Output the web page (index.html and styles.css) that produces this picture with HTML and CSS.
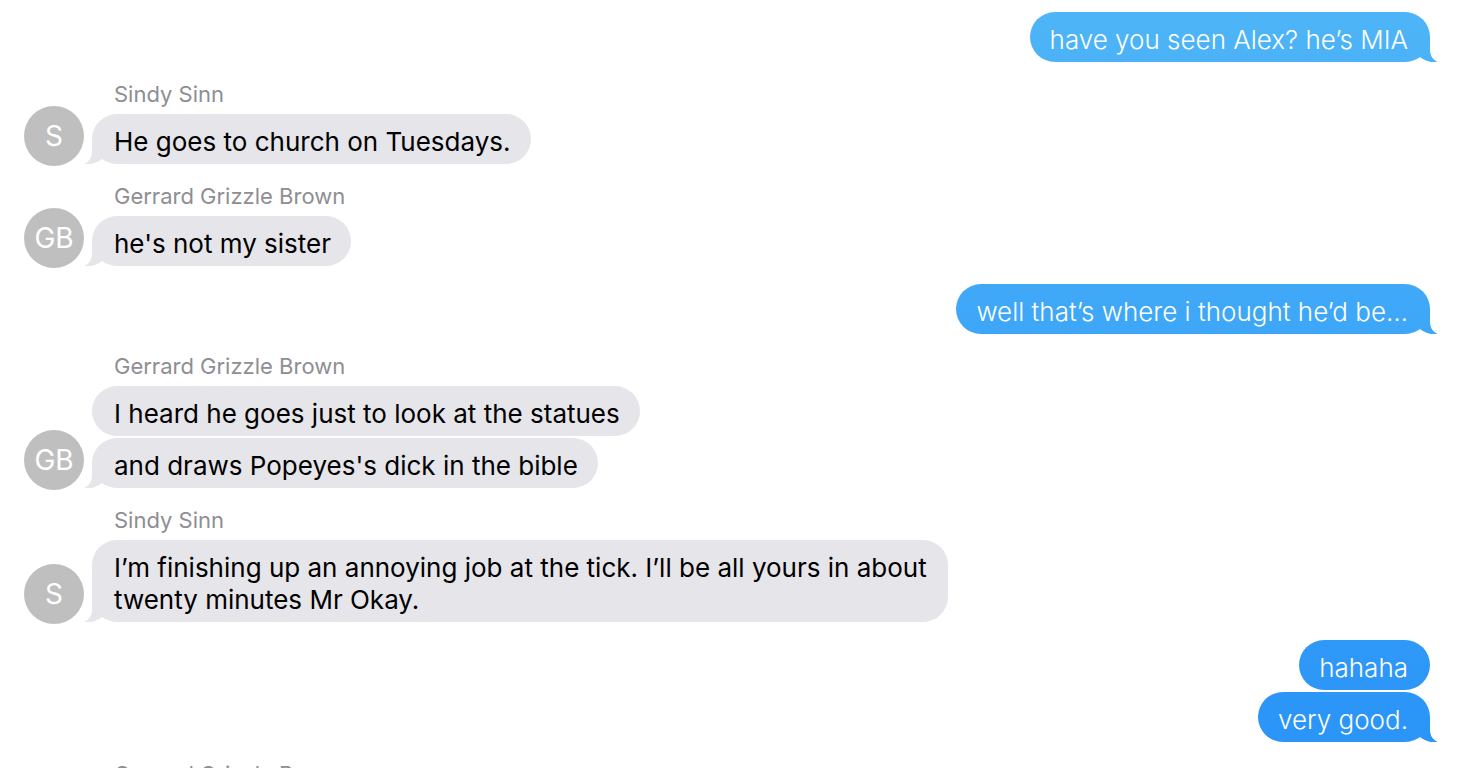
FILE: index.html
```
<!DOCTYPE html>
<html lang="en">
  <head>
    <meta charset="utf-8" />
    <title>Messages</title>
    <meta name="viewport" content="width=device-width,initial-scale=1" />
    <link rel="stylesheet" href="styles.css">
  </head>
  <body>
    <main class="thread">
      <section class="group group--sent">
        <p class="bubble bubble--tail">have you seen Alex? he’s MIA</p>
      </section>

      <section class="group">
        <h2 class="sender">Sindy Sinn</h2>
        <div class="row">
          <span class="avatar">S</span>
          <div class="bubbles">
            <p class="bubble bubble--tail">He goes to church on Tuesdays.</p>
          </div>
        </div>
      </section>

      <section class="group">
        <h2 class="sender">Gerrard Grizzle Brown</h2>
        <div class="row">
          <span class="avatar">GB</span>
          <div class="bubbles">
            <p class="bubble bubble--tail">he's not my sister</p>
          </div>
        </div>
      </section>

      <section class="group group--sent">
        <p class="bubble bubble--tail">well that’s where i thought he’d be…</p>
      </section>

      <section class="group">
        <h2 class="sender">Gerrard Grizzle Brown</h2>
        <div class="row">
          <span class="avatar">GB</span>
          <div class="bubbles">
            <p class="bubble">I heard he goes just to look at the statues</p>
            <p class="bubble bubble--tail">and draws Popeyes's dick in the bible</p>
          </div>
        </div>
      </section>

      <section class="group">
        <h2 class="sender">Sindy Sinn</h2>
        <div class="row">
          <span class="avatar">S</span>
          <div class="bubbles">
            <p class="bubble bubble--tail">I’m finishing up an annoying job at the tick. I’ll be all yours in about twenty minutes Mr Okay.</p>
          </div>
        </div>
      </section>

      <section class="group group--sent">
        <p class="bubble">hahaha</p>
        <p class="bubble bubble--tail">very good.</p>
      </section>

      <section class="group">
        <h2 class="sender">Gerrard Grizzle Brown</h2>
      </section>
    </main>
  </body>
</html>
```

FILE: styles.css
```
/* Base */
html { box-sizing: border-box; }
*, *:before, *:after { box-sizing: inherit; }
body {
  margin: 0;
  font-family: Inter, "Helvetica Neue", Helvetica, Arial, sans-serif;
  font-size: 26px;
  line-height: 32px;
  background-color: #fff;
  color: #000;
}

/* Thread */
.thread {
  display: flex;
  flex-direction: column;
  gap: 18px;
  height: 100vh;
  padding: 12px 28px 0 24px;
  overflow: hidden;
}
.group { flex: none; }
.group--sent {
  display: flex;
  flex-direction: column;
  align-items: flex-end;
  gap: 2px;
}
.sender {
  margin: 0 0 6px 90px;
  font-size: 22px;
  font-weight: 400;
  line-height: 28px;
  color: #8e8e93;
}
.row {
  display: flex;
  align-items: flex-end;
  gap: 8px;
}
/* Taller than a one-line bubble, so it reaches up beside the sender name */
.avatar {
  display: flex;
  flex: none;
  align-items: center;
  justify-content: center;
  width: 60px;
  height: 60px;
  margin-top: -8px;
  margin-bottom: -2px;
  border-radius: 50%;
  font-size: 28px;
  background-color: #bfbfbf;
  color: #fff;
}
.bubbles {
  display: flex;
  flex: 1;
  flex-direction: column;
  align-items: flex-start;
  gap: 2px;
}

/* Bubbles */
.bubble {
  position: relative;
  max-width: 64%;
  margin: 0;
  padding: 12px 20px 6px 22px;
  border-radius: 25px;
  background-color: #e5e5ea;
}
/* Sent bubbles share one gradient that runs down the window */
.group--sent .bubble {
  padding: 12px 22px 6px 20px;
  background: linear-gradient(#4eb5f7, #2993f8) fixed;
  font-weight: 300;
  color: #fff;
}
.bubble--tail:after {
  content: "";
  position: absolute;
  bottom: 0;
  left: -8px;
  width: 28px;
  height: 26px;
  background: inherit;
  clip-path: path("M8 0 V13 C8 20 5 24 0 26 C7 27 13 25 18 21 L26 0 Z");
}
.group--sent .bubble--tail:after {
  right: -8px;
  left: auto;
  clip-path: path("M20 0 V13 C20 20 23 24 28 26 C21 27 15 25 10 21 L2 0 Z");
}
```
